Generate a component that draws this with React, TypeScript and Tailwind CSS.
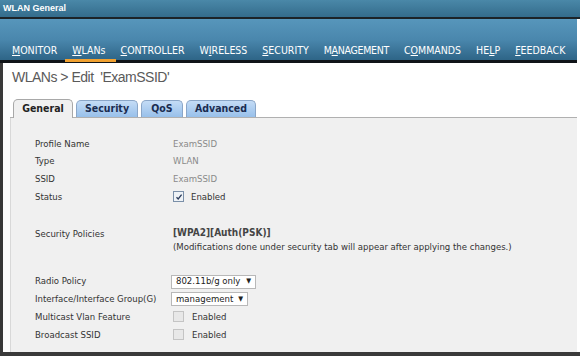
import React from "react";

const navItems: { pre: string; u: string; post: string }[] = [
  { pre: "", u: "M", post: "ONITOR" },
  { pre: "", u: "W", post: "LANs" },
  { pre: "", u: "C", post: "ONTROLLER" },
  { pre: "W", u: "I", post: "RELESS" },
  { pre: "", u: "S", post: "ECURITY" },
  { pre: "M", u: "A", post: "NAGEMENT" },
  { pre: "C", u: "O", post: "MMANDS" },
  { pre: "HE", u: "L", post: "P" },
  { pre: "", u: "F", post: "EEDBACK" },
];

function Checkbox({ checked }: { checked?: boolean }) {
  return (
    <span
      className={
        "inline-flex h-[11px] w-[11px] items-center justify-center border " +
        (checked ? "border-[#7a8fa8] bg-[#eef2f6]" : "border-[#c4c4c4] bg-[#e8e8e8]")
      }
    >
      {checked ? (
        <svg width="8" height="8" viewBox="0 0 8 8">
          <path d="M1.5 4.2 L3.2 6 L6.6 1.6" fill="none" stroke="#2a3a5a" strokeWidth="1.3" />
        </svg>
      ) : null}
    </span>
  );
}

function Select({ value, w }: { value: string; w: string }) {
  return (
    <span
      className={`inline-flex h-[14px] items-center justify-between border border-[#b8b8b8] bg-white pl-[4px] pr-[4px] text-[#222] ${w}`}
    >
      <span>{value}</span>
      <span className="text-[7px] leading-none">▼</span>
    </span>
  );
}

function Row({ label, children, mt = "" }: { label: string; children: React.ReactNode; mt?: string }) {
  return (
    <div className={`flex h-[17.7px] items-center ${mt}`}>
      <div className="w-[138px] shrink-0 text-[#333]">{label}</div>
      <div className="flex items-center">{children}</div>
    </div>
  );
}

export default function App() {
  return (
    <div className="relative flex h-[356px] w-[580px] flex-col overflow-hidden bg-white font-['DejaVu_Sans_Condensed','DejaVu_Sans',sans-serif]">
      {/* window title */}
      <div className="flex h-[17px] shrink-0 items-center bg-gradient-to-b from-[#4a88a8] to-[#346c8c] pl-[3px] font-['Liberation_Sans',sans-serif] text-[9px] font-bold text-white">
        WLAN General
      </div>
      <div className="h-[2px] shrink-0 bg-[#1c2328]" />

      {/* menu bar */}
      <div className="mr-[3px] flex h-[41px] shrink-0 items-end bg-gradient-to-b from-[#5796bb] via-[#4a87ad] to-[#2e6587] pb-[3px] pl-[12px]">
        <div className="flex gap-[15px] text-[10.5px] leading-[13px] text-white">
          {navItems.map((n, i) => (
            <span key={i} className={"relative" + (i === 5 ? " tracking-[-0.3px]" : "")}>
              {n.pre}
              <span className="underline underline-offset-[1px]">{n.u}</span>
              {n.post}
              {i === 1 ? (
                <span className="absolute -bottom-[5px] -left-[7px] -right-[10px] h-[3px] bg-[#f0a030]" />
              ) : null}
            </span>
          ))}
        </div>
      </div>
      <div className="mr-[3px] h-[3px] shrink-0 bg-[#101418]" />

      {/* content */}
      <div className="mr-[3px] flex min-h-0 flex-1 flex-col border-l-[3px] border-[#3a3a3a]">
        <div className="flex min-h-0 flex-1 flex-col pl-[7px]">
          <div className="mt-[4px] pl-[2px] font-['Liberation_Sans',sans-serif] text-[14px] tracking-[-0.5px] text-[#5a5a5a]">
            WLANs &gt; Edit&nbsp;&nbsp;'ExamSSID'
          </div>

          {/* tabs */}
          <div className="mt-[11px] flex items-end border-b border-[#b0b0b0] pl-[3px] text-[10.5px] font-bold">
            <div className="relative -mb-px flex h-[19px] w-[60px] items-center justify-center rounded-t-[5px] border border-b-0 border-[#a8a8a8] bg-[#f0f0f0] text-[#222]">
              General
            </div>
            <div className="ml-[3px] flex h-[17px] w-[62px] items-center justify-center rounded-t-[5px] border border-b-0 border-[#8aa6c8] bg-gradient-to-b from-[#c4dcf6] to-[#98c0ea] text-[#1a2c50]">
              Security
            </div>
            <div className="ml-[3px] flex h-[17px] w-[42px] items-center justify-center rounded-t-[5px] border border-b-0 border-[#8aa6c8] bg-gradient-to-b from-[#c4dcf6] to-[#98c0ea] text-[#1a2c50]">
              QoS
            </div>
            <div className="ml-[3px] flex h-[17px] w-[70px] items-center justify-center rounded-t-[5px] border border-b-0 border-[#8aa6c8] bg-gradient-to-b from-[#c4dcf6] to-[#98c0ea] text-[#1a2c50]">
              Advanced
            </div>
          </div>

          {/* panel */}
          <div className="min-h-0 flex-1 border-l border-[#d8d8d8] bg-[#f0f0f0] pl-[24px] pt-[17px] text-[9.5px]">
            <Row label="Profile Name">
              <span className="text-[#8a8a8a]">ExamSSID</span>
            </Row>
            <Row label="Type">
              <span className="text-[#8a8a8a]">WLAN</span>
            </Row>
            <Row label="SSID">
              <span className="text-[#8a8a8a]">ExamSSID</span>
            </Row>
            <Row label="Status">
              <Checkbox checked />
              <span className="ml-[7px] text-[#333]">Enabled</span>
            </Row>

            <div className="mt-[20px] flex">
              <div className="w-[138px] shrink-0 pt-[1px] text-[#333]">Security Policies</div>
              <div className="flex flex-col leading-[14px]">
                <span className="text-[10px] font-bold text-[#444]">[WPA2][Auth(PSK)]</span>
                <span className="text-[#333]">
                  (Modifications done under security tab will appear after applying the changes.)
                </span>
              </div>
            </div>

            <Row label="Radio Policy" mt="mt-[19px]">
              <span className="-ml-[2px]">
                <Select value="802.11b/g only" w="w-[85px]" />
              </span>
            </Row>
            <Row label="Interface/Interface Group(G)">
              <span className="-ml-[2px]">
                <Select value="management" w="w-[77px]" />
              </span>
            </Row>
            <Row label="Multicast Vlan Feature">
              <Checkbox />
              <span className="ml-[8px] text-[#333]">Enabled</span>
            </Row>
            <Row label="Broadcast SSID">
              <Checkbox />
              <span className="ml-[8px] text-[#333]">Enabled</span>
            </Row>
          </div>
        </div>
      </div>
      <div className="h-[4px] shrink-0 bg-[#3a3a3a]" />
    </div>
  );
}
